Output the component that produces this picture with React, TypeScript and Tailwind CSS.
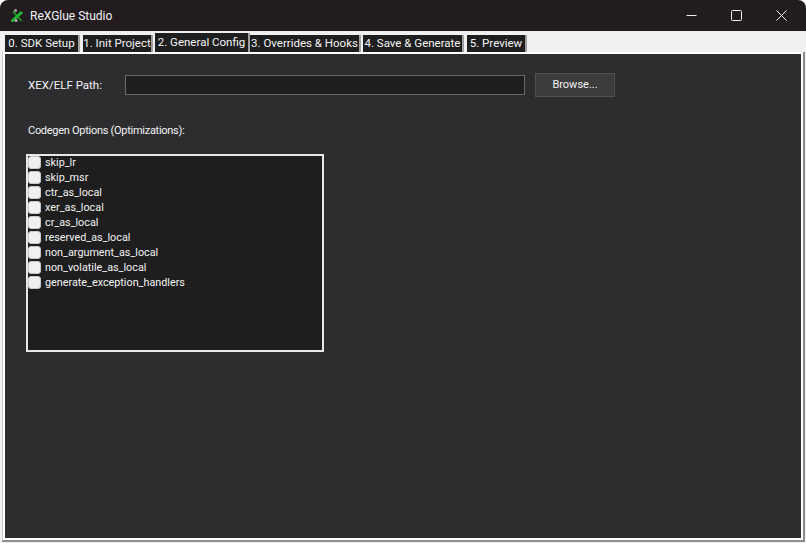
import React from 'react';

const TABS = [
  { label: '0. SDK Setup', w: 'w-[75px]', ml: 'ml-0' },
  { label: '1. Init Project', w: 'w-[70px]', ml: 'ml-[3px]' },
  { label: '2. General Config', w: 'w-[95px]', ml: 'ml-[2px]', active: true },
  { label: '3. Overrides & Hooks', w: 'w-[111px]', ml: 'ml-0' },
  { label: '4. Save & Generate', w: 'w-[101px]', ml: 'ml-[2px]' },
  { label: '5. Preview', w: 'w-[60px]', ml: 'ml-[3px]' },
];

const OPTIONS = [
  'skip_lr',
  'skip_msr',
  'ctr_as_local',
  'xer_as_local',
  'cr_as_local',
  'reserved_as_local',
  'non_argument_as_local',
  'non_volatile_as_local',
  'generate_exception_handlers',
];

function AppIcon() {
  return (
    <svg width="16" height="16" viewBox="0 0 16 16" className="shrink-0">
      <path d="M3 3.5 L11.5 13" stroke="#1fa32a" strokeWidth="1.6" fill="none" />
      <path d="M1.5 13.5 L12 4" stroke="#22b52d" strokeWidth="3" fill="none" />
      <circle cx="5.5" cy="2.4" r="1.5" fill="#a0a0a0" />
      <circle cx="6" cy="12.6" r="1.5" fill="#b0b0b0" />
    </svg>
  );
}

export default function App() {
  return (
    <div className="w-[806px] h-[543px] flex flex-col overflow-hidden bg-[#221c20] rounded-t-lg text-[11px] text-[#f4f4f4] font-['Roboto','Liberation_Sans',sans-serif]">
      {/* title bar */}
      <div className="h-[31px] flex items-center shrink-0 pl-[10px]">
        <AppIcon />
        <span className="ml-[4px] text-[#f2f2f2] text-[12px]">ReXGlue Studio</span>
        <div className="ml-auto flex items-center pr-[2px]">
          <div className="w-[45px] flex justify-center">
            <svg width="11" height="11" viewBox="0 0 11 11"><path d="M0.5 5.5H10.5" stroke="#f0f0f0" strokeWidth="1" /></svg>
          </div>
          <div className="w-[45px] flex justify-center">
            <svg width="11" height="11" viewBox="0 0 11 11"><rect x="0.5" y="0.5" width="10" height="10" rx="1" fill="none" stroke="#f0f0f0" strokeWidth="1" /></svg>
          </div>
          <div className="w-[45px] flex justify-center">
            <svg width="11" height="11" viewBox="0 0 11 11"><path d="M0.5 0.5L10.5 10.5M10.5 0.5L0.5 10.5" stroke="#f0f0f0" strokeWidth="1" /></svg>
          </div>
        </div>
      </div>

      {/* tab strip */}
      <div className="h-[21px] bg-[#f0f0f0] flex items-end pl-[5px] shrink-0">
        {TABS.map((t) => (
          <div
            key={t.label}
            className={`${t.w} ${t.ml} ${t.active ? 'h-[19px] mb-0' : 'h-[17px]'} bg-[#1e1e1e] text-[11.5px] text-[#f4f4f4] flex items-center justify-center whitespace-nowrap border-r-2 border-r-[#a0a0a0]`}
          >
            {t.label}
          </div>
        ))}
      </div>

      {/* window frame around the tab page */}
      <div className="flex-1 min-h-0 flex flex-col bg-[#f0f0f0] pl-[2px] pr-[1px] pb-[1px]">
        <div className="flex-1 min-h-0 flex border-l-[1px] border-r-2 border-b-2 border-l-[#c8c8c8] border-r-[#8c8c8c] border-b-[#8c8c8c]">
          <div className="flex-1 min-w-0 bg-[#2d2d30] border-2 border-white pl-[21px] flex flex-col">
            <div className="flex items-center mt-[19px] h-[24px] ml-[2px]">
              <span className="w-[97px] text-[11.5px] pt-px">XEX/ELF Path:</span>
              <div className="w-[400px] h-[20px] bg-[#1e1e1e] border border-[#6a6a6a]" />
              <button className="ml-[10px] w-[80px] h-[24px] bg-[#3c3c3c] border border-[#505050] text-[11px] pt-px">Browse...</button>
            </div>

            <div className="mt-[26px] ml-[2px] tracking-[-0.28px] leading-[16px]">Codegen Options (Optimizations):</div>

            <div className="mt-[15px] w-[298px] h-[198px] bg-[#1e1e1e] border-2 border-[#e8e8e8] flex flex-col text-[10.8px]">
              {OPTIONS.map((o, i) => (
                <div key={o} className={`h-[15px] flex items-center leading-none ${i === 0 ? '-mt-px' : ''}`}>
                  <div className="w-[13px] h-[13px] rounded-[3px] bg-[#f0f0f0] border border-[#c8c8c8]" />
                  <span className="ml-[4px] pt-[2px]">{o}</span>
                </div>
              ))}
            </div>
          </div>
        </div>
      </div>
    </div>
  );
}
